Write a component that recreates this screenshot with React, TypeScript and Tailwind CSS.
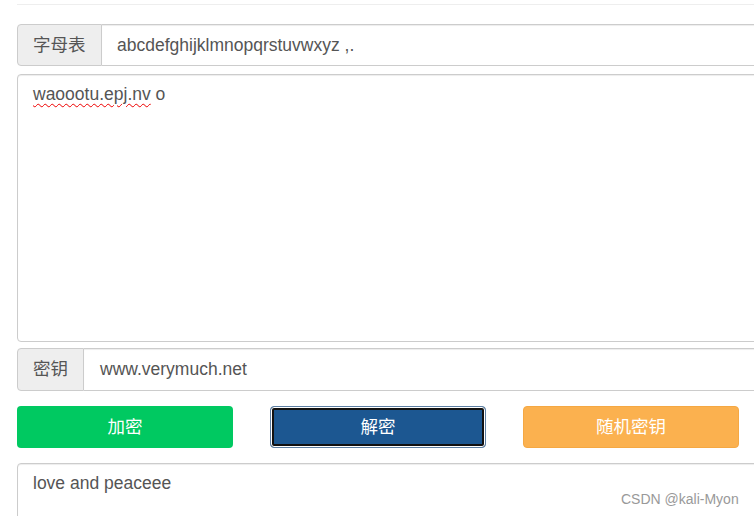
import React from "react";

const font = "font-['Liberation_Sans','Noto_Sans_CJK_SC',Arial,sans-serif]";

export default function App() {
  return (
    <div className={`relative w-[754px] h-[516px] overflow-hidden bg-white text-[#555] text-[17.5px] ${font}`}>
      <div className="w-[800px] pl-[17px]">
        <div className="pt-[4px]">
          <div className="h-px bg-[#eee]" />
        </div>

        <div className="mt-[19px] flex h-[42px]">
          <div className="flex w-[85px] shrink-0 items-center rounded-l-[4px] border border-[#ccc] bg-[#eee] pl-[15px]">
            字母表
          </div>
          <div className="flex flex-1 items-center border border-l-0 border-[#ccc] pl-[15px] shadow-[inset_0_1px_1px_rgba(0,0,0,0.075)]">
            abcdefghijklmnopqrstuvwxyz ,.
          </div>
        </div>

        <div className="mt-[8px] h-[268px] rounded-l-[4px] border border-[#ccc] pl-[15px] pt-[7px] leading-[25px] shadow-[inset_0_1px_1px_rgba(0,0,0,0.075)]">
          <span className="underline decoration-wavy decoration-[#e00] decoration-1 underline-offset-[3px]">waoootu.epj.nv</span> o
        </div>

        <div className="mt-[6px] flex h-[43px]">
          <div className="flex w-[67px] shrink-0 items-center rounded-l-[4px] border border-[#ccc] bg-[#eee] pl-[15px]">
            密钥
          </div>
          <div className="flex flex-1 items-center border border-l-0 border-[#ccc] pl-[16px] shadow-[inset_0_1px_1px_rgba(0,0,0,0.075)]">
            www.verymuch.net
          </div>
        </div>

        <div className="mt-[15px] flex h-[42px] gap-[37px]">
          <div className="flex w-[216px] items-center justify-center rounded-[4px] bg-[#00c961] text-white">
            加密
          </div>
          <div className="flex w-[216px] items-center justify-center rounded-[4px] border border-[#5d7fa3] bg-[#1c5791] text-white shadow-[inset_0_0_0_1px_#ffffff,inset_0_0_0_3px_#111111]">
            解密
          </div>
          <div className="flex w-[216px] items-center justify-center rounded-[4px] border border-[#f5a843] bg-[#fbb14f] text-white">
            随机密钥
          </div>
        </div>

        <div className="mt-[15px] h-[120px] rounded-l-[4px] border border-[#ccc] pl-[15px] pt-[7px] leading-[25px] shadow-[inset_0_1px_1px_rgba(0,0,0,0.075)]">
          love and peaceee
        </div>
      </div>

      <div className="absolute left-[621px] top-[490px] text-[14px] leading-[18px] text-[#999]">
        CSDN @kali-Myon
      </div>
    </div>
  );
}
